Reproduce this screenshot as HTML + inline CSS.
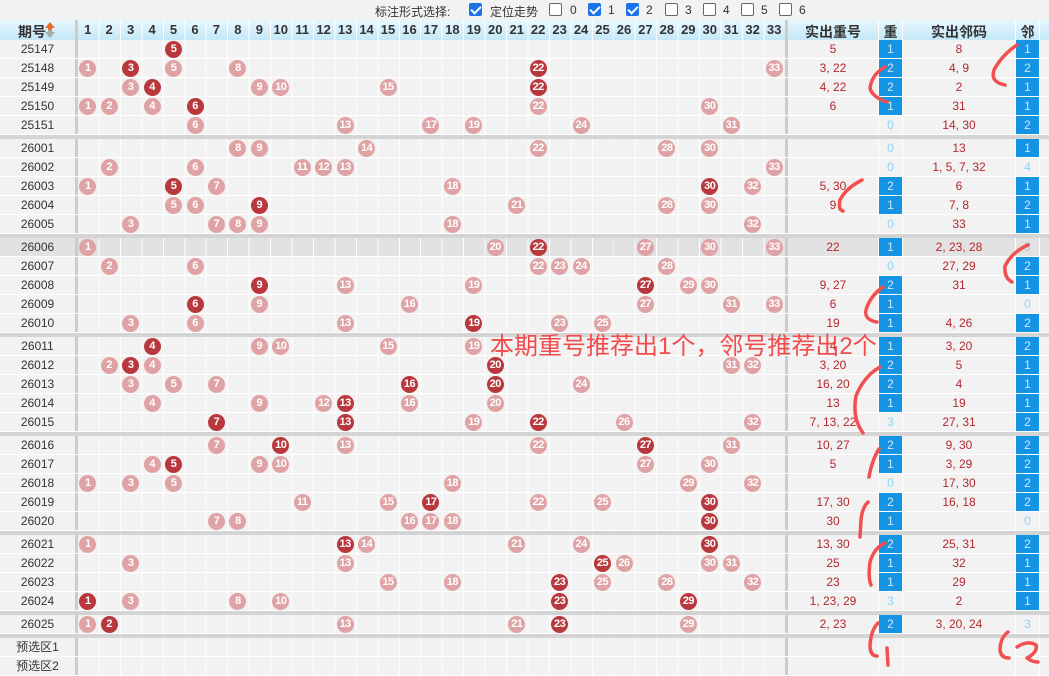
<!DOCTYPE html>
<html><head><meta charset="utf-8">
<style>
*{margin:0;padding:0;box-sizing:border-box}
body{width:1049px;height:673px;overflow:hidden;background:#d4d4d4;font-family:"Liberation Sans","Noto Sans CJK SC",sans-serif;position:relative}
.top{position:absolute;left:0;top:0;width:1049px;height:20px;background:#f2f2f2;font-size:12px;color:#333}
.top span{position:absolute;top:3px}
.cb{position:absolute;top:3px;width:13px;height:13px;border:1px solid #666;border-radius:2px;background:#fff}
.cb.on{background:#1a73e8;border-color:#1a73e8}
.cb.on::after{content:"";position:absolute;left:3px;top:0px;width:4px;height:8px;border:solid #fff;border-width:0 2px 2px 0;transform:rotate(45deg)}
.hd{position:absolute;left:0;top:20px;width:1049px;height:20px;background:linear-gradient(#fff,#fff) 878px 0/1px 100% no-repeat,linear-gradient(#fff,#fff) 902px 0/1px 100% no-repeat,linear-gradient(#fff,#fff) 1015px 0/1px 100% no-repeat,linear-gradient(#fff,#fff) 1039px 0/1px 100% no-repeat,linear-gradient(#ccc,#ccc) 75px 0/3px 100% no-repeat,linear-gradient(#ccc,#ccc) 785px 0/3px 100% no-repeat,linear-gradient(#e8f7fe,#c3e8f8);font-weight:bold;color:#333;font-size:13px}
.hd::before{content:"";position:absolute;left:78px;width:707px;top:0;bottom:0;background:repeating-linear-gradient(to right,transparent 0 20.45px,#fff 20.45px 21.45px)}
.hd i{position:absolute;top:2px;font-style:normal;text-align:center}
.hn{width:21.45px;left:calc(var(--k)*21.45px + 55.55px)}
.r{position:absolute;left:0;width:1049px;height:19px;border-bottom:1px solid #fff;background:linear-gradient(#fff,#fff) 878px 0/1px 100% no-repeat,linear-gradient(#fff,#fff) 902px 0/1px 100% no-repeat,linear-gradient(#fff,#fff) 1015px 0/1px 100% no-repeat,linear-gradient(#fff,#fff) 1039px 0/1px 100% no-repeat,linear-gradient(#ccc,#ccc) 75px 0/3px 100% no-repeat,linear-gradient(#ccc,#ccc) 785px 0/3px 100% no-repeat,#f2f2f2;font-size:12px}
.r.hl{background:linear-gradient(#fff,#fff) 878px 0/1px 100% no-repeat,linear-gradient(#fff,#fff) 902px 0/1px 100% no-repeat,linear-gradient(#fff,#fff) 1015px 0/1px 100% no-repeat,linear-gradient(#fff,#fff) 1039px 0/1px 100% no-repeat,linear-gradient(#ccc,#ccc) 75px 0/3px 100% no-repeat,linear-gradient(#ccc,#ccc) 785px 0/3px 100% no-repeat,#e2e2e2}
.r::before{content:"";position:absolute;left:78px;width:707px;top:0;bottom:0;background:repeating-linear-gradient(to right,transparent 0 20.45px,#fff 20.45px 21.45px)}
.r i{position:absolute;font-style:normal;top:0;line-height:18px;text-align:center}
.l{left:0;width:75px;color:#333}
.x{left:788px;width:90px;color:#b3282d}
.y{left:903px;width:112px;color:#b3282d}
.z{left:879px;width:23px;color:#8fd3f7}
.n{left:1016px;width:23px;color:#8fd3f7}
.z.on,.n.on{background:#1594e4;color:#cfe8fb}
.b{position:absolute;top:1px;width:17px;height:17px;border-radius:50%;background:#e0a3a5;color:#fff;font-size:11px;font-weight:bold;line-height:17px;text-align:center;left:calc(var(--k)*21.45px + 57.8px);letter-spacing:-0.5px}
.b.d{background:#b8383d}
.ov{position:absolute;left:490px;top:332px;font-size:24px;line-height:30px;color:#f24b4b;font-family:"Liberation Sans","Noto Sans CJK SC",sans-serif;white-space:nowrap}
svg{position:absolute;left:0;top:0}
</style></head><body>
<div class="top">
<span style="left:375px">标注形式选择:</span>
<div class="cb on" style="left:469px"></div><span style="left:490px">定位走势</span>
<div class="cb" style="left:549px"></div><span style="left:570px">0</span>
<div class="cb on" style="left:588px"></div><span style="left:608px">1</span>
<div class="cb on" style="left:626px"></div><span style="left:646px">2</span>
<div class="cb" style="left:665px"></div><span style="left:685px">3</span>
<div class="cb" style="left:703px"></div><span style="left:723px">4</span>
<div class="cb" style="left:741px"></div><span style="left:761px">5</span>
<div class="cb" style="left:779px"></div><span style="left:799px">6</span>
</div>
<div class="hd">
<i style="left:18px;font-size:14px">期号</i>
<svg style="left:45px;top:2px" width="10" height="16"><path d="M5 0 L10 6 H7 V8 H3 V6 H0Z" fill="#e8702a"/><path d="M5 16 L10 10 H7 V8 H3 V10 H0Z" fill="#aaa"/></svg>
<i class="hn" style="--k:1">1</i><i class="hn" style="--k:2">2</i><i class="hn" style="--k:3">3</i><i class="hn" style="--k:4">4</i><i class="hn" style="--k:5">5</i><i class="hn" style="--k:6">6</i><i class="hn" style="--k:7">7</i><i class="hn" style="--k:8">8</i><i class="hn" style="--k:9">9</i><i class="hn" style="--k:10">10</i><i class="hn" style="--k:11">11</i><i class="hn" style="--k:12">12</i><i class="hn" style="--k:13">13</i><i class="hn" style="--k:14">14</i><i class="hn" style="--k:15">15</i><i class="hn" style="--k:16">16</i><i class="hn" style="--k:17">17</i><i class="hn" style="--k:18">18</i><i class="hn" style="--k:19">19</i><i class="hn" style="--k:20">20</i><i class="hn" style="--k:21">21</i><i class="hn" style="--k:22">22</i><i class="hn" style="--k:23">23</i><i class="hn" style="--k:24">24</i><i class="hn" style="--k:25">25</i><i class="hn" style="--k:26">26</i><i class="hn" style="--k:27">27</i><i class="hn" style="--k:28">28</i><i class="hn" style="--k:29">29</i><i class="hn" style="--k:30">30</i><i class="hn" style="--k:31">31</i><i class="hn" style="--k:32">32</i><i class="hn" style="--k:33">33</i>
<i style="left:788px;width:90px;font-size:14px">实出重号</i>
<i style="left:879px;width:23px;font-size:14px">重</i>
<i style="left:903px;width:112px;font-size:14px">实出邻码</i>
<i style="left:1016px;width:23px;font-size:14px">邻</i>
</div>

<div class="r" style="top:40px"><i class="l">25147</i><b class="b d" style="--k:5">5</b><i class="x">5</i><i class="z on">1</i><i class="y">8</i><i class="n on">1</i></div>
<div class="r" style="top:59px"><i class="l">25148</i><b class="b" style="--k:1">1</b><b class="b d" style="--k:3">3</b><b class="b" style="--k:5">5</b><b class="b" style="--k:8">8</b><b class="b d" style="--k:22">22</b><b class="b" style="--k:33">33</b><i class="x">3, 22</i><i class="z on">2</i><i class="y">4, 9</i><i class="n on">2</i></div>
<div class="r" style="top:78px"><i class="l">25149</i><b class="b" style="--k:3">3</b><b class="b d" style="--k:4">4</b><b class="b" style="--k:9">9</b><b class="b" style="--k:10">10</b><b class="b" style="--k:15">15</b><b class="b d" style="--k:22">22</b><i class="x">4, 22</i><i class="z on">2</i><i class="y">2</i><i class="n on">1</i></div>
<div class="r" style="top:97px"><i class="l">25150</i><b class="b" style="--k:1">1</b><b class="b" style="--k:2">2</b><b class="b" style="--k:4">4</b><b class="b d" style="--k:6">6</b><b class="b" style="--k:22">22</b><b class="b" style="--k:30">30</b><i class="x">6</i><i class="z on">1</i><i class="y">31</i><i class="n on">1</i></div>
<div class="r" style="top:116px"><i class="l">25151</i><b class="b" style="--k:6">6</b><b class="b" style="--k:13">13</b><b class="b" style="--k:17">17</b><b class="b" style="--k:19">19</b><b class="b" style="--k:24">24</b><b class="b" style="--k:31">31</b><i class="z">0</i><i class="y">14, 30</i><i class="n on">2</i></div>

<div class="r" style="top:139px"><i class="l">26001</i><b class="b" style="--k:8">8</b><b class="b" style="--k:9">9</b><b class="b" style="--k:14">14</b><b class="b" style="--k:22">22</b><b class="b" style="--k:28">28</b><b class="b" style="--k:30">30</b><i class="z">0</i><i class="y">13</i><i class="n on">1</i></div>
<div class="r" style="top:158px"><i class="l">26002</i><b class="b" style="--k:2">2</b><b class="b" style="--k:6">6</b><b class="b" style="--k:11">11</b><b class="b" style="--k:12">12</b><b class="b" style="--k:13">13</b><b class="b" style="--k:33">33</b><i class="z">0</i><i class="y">1, 5, 7, 32</i><i class="n">4</i></div>
<div class="r" style="top:177px"><i class="l">26003</i><b class="b" style="--k:1">1</b><b class="b d" style="--k:5">5</b><b class="b" style="--k:7">7</b><b class="b" style="--k:18">18</b><b class="b d" style="--k:30">30</b><b class="b" style="--k:32">32</b><i class="x">5, 30</i><i class="z on">2</i><i class="y">6</i><i class="n on">1</i></div>
<div class="r" style="top:196px"><i class="l">26004</i><b class="b" style="--k:5">5</b><b class="b" style="--k:6">6</b><b class="b d" style="--k:9">9</b><b class="b" style="--k:21">21</b><b class="b" style="--k:28">28</b><b class="b" style="--k:30">30</b><i class="x">9</i><i class="z on">1</i><i class="y">7, 8</i><i class="n on">2</i></div>
<div class="r" style="top:215px"><i class="l">26005</i><b class="b" style="--k:3">3</b><b class="b" style="--k:7">7</b><b class="b" style="--k:8">8</b><b class="b" style="--k:9">9</b><b class="b" style="--k:18">18</b><b class="b" style="--k:32">32</b><i class="z">0</i><i class="y">33</i><i class="n on">1</i></div>

<div class="r hl" style="top:238px"><i class="l">26006</i><b class="b" style="--k:1">1</b><b class="b" style="--k:20">20</b><b class="b d" style="--k:22">22</b><b class="b" style="--k:27">27</b><b class="b" style="--k:30">30</b><b class="b" style="--k:33">33</b><i class="x">22</i><i class="z on">1</i><i class="y">2, 23, 28</i><i class="n">3</i></div>
<div class="r" style="top:257px"><i class="l">26007</i><b class="b" style="--k:2">2</b><b class="b" style="--k:6">6</b><b class="b" style="--k:22">22</b><b class="b" style="--k:23">23</b><b class="b" style="--k:24">24</b><b class="b" style="--k:28">28</b><i class="z">0</i><i class="y">27, 29</i><i class="n on">2</i></div>
<div class="r" style="top:276px"><i class="l">26008</i><b class="b d" style="--k:9">9</b><b class="b" style="--k:13">13</b><b class="b" style="--k:19">19</b><b class="b d" style="--k:27">27</b><b class="b" style="--k:29">29</b><b class="b" style="--k:30">30</b><i class="x">9, 27</i><i class="z on">2</i><i class="y">31</i><i class="n on">1</i></div>
<div class="r" style="top:295px"><i class="l">26009</i><b class="b d" style="--k:6">6</b><b class="b" style="--k:9">9</b><b class="b" style="--k:16">16</b><b class="b" style="--k:27">27</b><b class="b" style="--k:31">31</b><b class="b" style="--k:33">33</b><i class="x">6</i><i class="z on">1</i><i class="n">0</i></div>
<div class="r" style="top:314px"><i class="l">26010</i><b class="b" style="--k:3">3</b><b class="b" style="--k:6">6</b><b class="b" style="--k:13">13</b><b class="b d" style="--k:19">19</b><b class="b" style="--k:23">23</b><b class="b" style="--k:25">25</b><i class="x">19</i><i class="z on">1</i><i class="y">4, 26</i><i class="n on">2</i></div>

<div class="r" style="top:337px"><i class="l">26011</i><b class="b d" style="--k:4">4</b><b class="b" style="--k:9">9</b><b class="b" style="--k:10">10</b><b class="b" style="--k:15">15</b><b class="b" style="--k:19">19</b><i class="x">4</i><i class="z on">1</i><i class="y">3, 20</i><i class="n on">2</i></div>
<div class="r" style="top:356px"><i class="l">26012</i><b class="b" style="--k:2">2</b><b class="b d" style="--k:3">3</b><b class="b" style="--k:4">4</b><b class="b d" style="--k:20">20</b><b class="b" style="--k:31">31</b><b class="b" style="--k:32">32</b><i class="x">3, 20</i><i class="z on">2</i><i class="y">5</i><i class="n on">1</i></div>
<div class="r" style="top:375px"><i class="l">26013</i><b class="b" style="--k:3">3</b><b class="b" style="--k:5">5</b><b class="b" style="--k:7">7</b><b class="b d" style="--k:16">16</b><b class="b d" style="--k:20">20</b><b class="b" style="--k:24">24</b><i class="x">16, 20</i><i class="z on">2</i><i class="y">4</i><i class="n on">1</i></div>
<div class="r" style="top:394px"><i class="l">26014</i><b class="b" style="--k:4">4</b><b class="b" style="--k:9">9</b><b class="b" style="--k:12">12</b><b class="b d" style="--k:13">13</b><b class="b" style="--k:16">16</b><b class="b" style="--k:20">20</b><i class="x">13</i><i class="z on">1</i><i class="y">19</i><i class="n on">1</i></div>
<div class="r" style="top:413px"><i class="l">26015</i><b class="b d" style="--k:7">7</b><b class="b d" style="--k:13">13</b><b class="b" style="--k:19">19</b><b class="b d" style="--k:22">22</b><b class="b" style="--k:26">26</b><b class="b" style="--k:32">32</b><i class="x">7, 13, 22</i><i class="z">3</i><i class="y">27, 31</i><i class="n on">2</i></div>

<div class="r" style="top:436px"><i class="l">26016</i><b class="b" style="--k:7">7</b><b class="b d" style="--k:10">10</b><b class="b" style="--k:13">13</b><b class="b" style="--k:22">22</b><b class="b d" style="--k:27">27</b><b class="b" style="--k:31">31</b><i class="x">10, 27</i><i class="z on">2</i><i class="y">9, 30</i><i class="n on">2</i></div>
<div class="r" style="top:455px"><i class="l">26017</i><b class="b" style="--k:4">4</b><b class="b d" style="--k:5">5</b><b class="b" style="--k:9">9</b><b class="b" style="--k:10">10</b><b class="b" style="--k:27">27</b><b class="b" style="--k:30">30</b><i class="x">5</i><i class="z on">1</i><i class="y">3, 29</i><i class="n on">2</i></div>
<div class="r" style="top:474px"><i class="l">26018</i><b class="b" style="--k:1">1</b><b class="b" style="--k:3">3</b><b class="b" style="--k:5">5</b><b class="b" style="--k:18">18</b><b class="b" style="--k:29">29</b><b class="b" style="--k:32">32</b><i class="z">0</i><i class="y">17, 30</i><i class="n on">2</i></div>
<div class="r" style="top:493px"><i class="l">26019</i><b class="b" style="--k:11">11</b><b class="b" style="--k:15">15</b><b class="b d" style="--k:17">17</b><b class="b" style="--k:22">22</b><b class="b" style="--k:25">25</b><b class="b d" style="--k:30">30</b><i class="x">17, 30</i><i class="z on">2</i><i class="y">16, 18</i><i class="n on">2</i></div>
<div class="r" style="top:512px"><i class="l">26020</i><b class="b" style="--k:7">7</b><b class="b" style="--k:8">8</b><b class="b" style="--k:16">16</b><b class="b" style="--k:17">17</b><b class="b" style="--k:18">18</b><b class="b d" style="--k:30">30</b><i class="x">30</i><i class="z on">1</i><i class="n">0</i></div>

<div class="r" style="top:535px"><i class="l">26021</i><b class="b" style="--k:1">1</b><b class="b d" style="--k:13">13</b><b class="b" style="--k:14">14</b><b class="b" style="--k:21">21</b><b class="b" style="--k:24">24</b><b class="b d" style="--k:30">30</b><i class="x">13, 30</i><i class="z on">2</i><i class="y">25, 31</i><i class="n on">2</i></div>
<div class="r" style="top:554px"><i class="l">26022</i><b class="b" style="--k:3">3</b><b class="b" style="--k:13">13</b><b class="b d" style="--k:25">25</b><b class="b" style="--k:26">26</b><b class="b" style="--k:30">30</b><b class="b" style="--k:31">31</b><i class="x">25</i><i class="z on">1</i><i class="y">32</i><i class="n on">1</i></div>
<div class="r" style="top:573px"><i class="l">26023</i><b class="b" style="--k:15">15</b><b class="b" style="--k:18">18</b><b class="b d" style="--k:23">23</b><b class="b" style="--k:25">25</b><b class="b" style="--k:28">28</b><b class="b" style="--k:32">32</b><i class="x">23</i><i class="z on">1</i><i class="y">29</i><i class="n on">1</i></div>
<div class="r" style="top:592px"><i class="l">26024</i><b class="b d" style="--k:1">1</b><b class="b" style="--k:3">3</b><b class="b" style="--k:8">8</b><b class="b" style="--k:10">10</b><b class="b d" style="--k:23">23</b><b class="b d" style="--k:29">29</b><i class="x">1, 23, 29</i><i class="z">3</i><i class="y">2</i><i class="n on">1</i></div>

<div class="r" style="top:615px"><i class="l">26025</i><b class="b" style="--k:1">1</b><b class="b d" style="--k:2">2</b><b class="b" style="--k:13">13</b><b class="b" style="--k:21">21</b><b class="b d" style="--k:23">23</b><b class="b" style="--k:29">29</b><i class="x">2, 23</i><i class="z on">2</i><i class="y">3, 20, 24</i><i class="n">3</i></div>

<div class="r" style="top:638px"><i class="l">预选区1</i></div>
<div class="r" style="top:657px"><i class="l">预选区2</i></div>

<div class="ov">本期重号推荐出1个，邻号推荐出2个</div>

<svg width="1049" height="673" fill="none" stroke="#f44f50" stroke-width="3.5" stroke-linecap="round" stroke-linejoin="round">
<path d="M1017 45 Q1002 55 994 70 Q990 82 1005 85"/>
<path d="M885 67 Q872 74 870 88 Q872 97 887 102"/>
<path d="M862 180 Q846 188 840 200 Q838 210 843 211"/>
<path d="M1028 245 Q1012 252 1005 266 Q1004 278 1012 282"/>
<path d="M883 287 Q870 296 866 310 Q864 320 877 322"/>
<path d="M880 367 Q864 376 856 396 Q852 418 863 433"/>
<path d="M879 449 Q872 460 869 477"/>
<path d="M868 502 Q862 508 861 520 L860 537"/>
<path d="M885 543 Q874 548 870 562 Q868 578 871 585"/>
<path d="M878 623 Q871 630 870 645 Q870 656 877 656"/>
<path d="M887 648 L888 665"/>
<path d="M1008 632 Q1000 638 1000 650 Q1001 658 1009 658"/>
<path d="M1017 647 Q1028 640 1036 645 Q1038 652 1027 658 Q1032 662 1038 662"/>
</svg>
</body></html>
